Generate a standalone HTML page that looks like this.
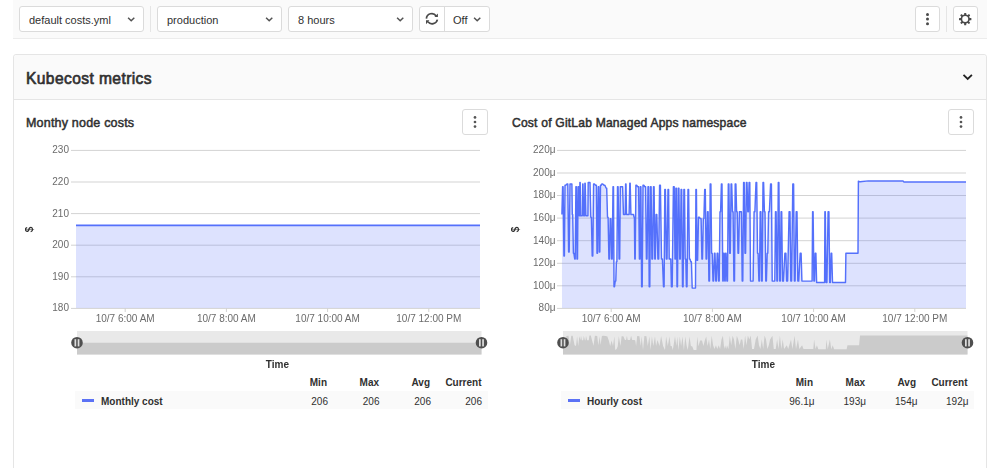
<!DOCTYPE html>
<html><head><meta charset="utf-8">
<style>
*{box-sizing:border-box;margin:0;padding:0}
html,body{width:1000px;height:468px;overflow:hidden;background:#fff;font-family:"Liberation Sans",sans-serif;color:#303030}
.abs{position:absolute}
#toolbar{position:absolute;left:13px;top:0;width:974px;height:39px;background:#fafafa;border-bottom:1px solid #ececec}
.btn{position:absolute;top:6px;height:26px;background:#fff;border:1px solid #dbdbdb;border-radius:3px}
.btn .t{position:absolute;top:7px;font-size:11px;line-height:13px;color:#303030;white-space:nowrap}
.chev{position:absolute;top:9px;width:8px;height:6px;overflow:visible}
.sep{position:absolute;top:6px;width:1px;height:26px;background:#e5e5e5}
#panel{position:absolute;left:13px;top:54px;width:974px;height:430px;border:1px solid #e5e5e5;border-radius:3px;background:#fff}
#phead{position:absolute;left:0;top:0;width:972px;height:45px;background:#fafafa;border-bottom:1px solid #e5e5e5;border-radius:3px 3px 0 0}
.title{position:absolute;font-weight:bold;font-size:11.8px;line-height:14px;color:#303030;white-space:nowrap}
.semi{font-weight:normal;-webkit-text-stroke:0.65px #303030}
.kb{position:absolute;width:26px;height:26px;background:#fff;border:1px solid #dbdbdb;border-radius:3px}
.legrow{position:absolute;top:391px;height:18px;background:#fafafa}
.lh{position:absolute;font-weight:bold;font-size:10px;line-height:12px;color:#303030;white-space:nowrap}
.lv{position:absolute;font-size:10px;line-height:12px;color:#303030;white-space:nowrap}
.lsw{position:absolute;width:12px;height:3px;background:#5b72f5}
</style></head>
<body>
<div id="toolbar">
  <div class="btn" style="left:6px;width:125px"><span class="t" style="left:9px">default costs.yml</span>
    <svg class="chev" style="left:107px" viewBox="0 0 8 6"><path d="M1.1 1.7 L4.2 4.8 L7.3 1.7" fill="none" stroke="#525252" stroke-width="1.45"/></svg></div>
  <div class="sep" style="left:137px"></div>
  <div class="btn" style="left:144px;width:125px"><span class="t" style="left:9px">production</span>
    <svg class="chev" style="left:107px" viewBox="0 0 8 6"><path d="M1.1 1.7 L4.2 4.8 L7.3 1.7" fill="none" stroke="#525252" stroke-width="1.45"/></svg></div>
  <div class="btn" style="left:275px;width:125px"><span class="t" style="left:9px">8 hours</span>
    <svg class="chev" style="left:107px" viewBox="0 0 8 6"><path d="M1.1 1.7 L4.2 4.8 L7.3 1.7" fill="none" stroke="#525252" stroke-width="1.45"/></svg></div>
  <div class="btn" style="left:406px;width:71px">
    <svg class="abs" style="left:5px;top:5px" width="15" height="15" viewBox="0 0 15 15"><g fill="none" stroke="#4a4a4a" stroke-width="1.7"><path d="M1.4 6.6 A5.4 5.4 0 0 1 11.2 3.9"/><path d="M12.4 7.6 A5.4 5.4 0 0 1 2.9 9.8"/></g><path d="M12.9 1.4 L12.9 5.0 L9.4 5.0 Z M1.0 8.3 L1.0 12.3 L4.4 8.3 Z" fill="#4a4a4a"/></svg>
    <div class="abs" style="left:24px;top:0;width:1px;height:24px;background:#dbdbdb"></div>
    <span class="t" style="left:33px">Off</span>
    <svg class="chev" style="left:52.8px" viewBox="0 0 8 6"><path d="M1.1 1.7 L4.2 4.8 L7.3 1.7" fill="none" stroke="#525252" stroke-width="1.45"/></svg>
  </div>
  <div class="btn" style="left:902px;width:25px"><svg class="abs" style="left:0;top:0" width="23" height="24" viewBox="0 0 23 24"><g fill="#4a4a4a"><circle cx="11.5" cy="7.4" r="1.5"/><circle cx="11.5" cy="12.1" r="1.5"/><circle cx="11.5" cy="16.8" r="1.5"/></g></svg></div>
  <div class="sep" style="left:933px"></div>
  <div class="btn" style="left:940px;width:25px"><svg class="abs" style="left:0;top:0" width="23" height="24" viewBox="0 0 23 24">
    <g transform="translate(11.2,12.1)" fill="#4a4a4a">
      <circle r="4.6"/>
      <rect x="-1.05" y="-6.2" width="2.1" height="3" rx="0.5" transform="rotate(0)"/><rect x="-1.05" y="-6.2" width="2.1" height="3" rx="0.5" transform="rotate(45)"/><rect x="-1.05" y="-6.2" width="2.1" height="3" rx="0.5" transform="rotate(90)"/><rect x="-1.05" y="-6.2" width="2.1" height="3" rx="0.5" transform="rotate(135)"/><rect x="-1.05" y="-6.2" width="2.1" height="3" rx="0.5" transform="rotate(180)"/><rect x="-1.05" y="-6.2" width="2.1" height="3" rx="0.5" transform="rotate(225)"/><rect x="-1.05" y="-6.2" width="2.1" height="3" rx="0.5" transform="rotate(270)"/><rect x="-1.05" y="-6.2" width="2.1" height="3" rx="0.5" transform="rotate(315)"/>
      <circle r="3.0" fill="#fff"/>
    </g></svg></div>
</div>
<div id="panel">
  <div id="phead"><span class="title semi" style="left:12px;top:14px;font-size:15.6px;line-height:19px;letter-spacing:0.4px">Kubecost metrics</span>
    <svg class="abs" style="left:948px;top:18px" width="12" height="9" viewBox="0 0 12 9"><path d="M1.5 1.8 L5.7 6 L9.9 1.8" fill="none" stroke="#222" stroke-width="1.8"/></svg>
  </div>
</div>
<span class="title semi" style="left:26px;top:116px;font-size:12.5px;line-height:15px;letter-spacing:0.2px;-webkit-text-stroke-width:0.5px">Monthy node costs</span>
<span class="title semi" style="left:512px;top:116px;font-size:12.1px;line-height:15px;letter-spacing:0.2px;-webkit-text-stroke-width:0.5px">Cost of GitLab Managed Apps namespace</span>
<div class="kb" style="left:462px;top:109px"><svg class="abs" style="left:0;top:0" width="24" height="24" viewBox="0 0 24 24"><g fill="#555"><circle cx="12" cy="7.4" r="1.35"/><circle cx="12" cy="12" r="1.35"/><circle cx="12" cy="16.6" r="1.35"/></g></svg></div>
<div class="kb" style="left:948px;top:109px"><svg class="abs" style="left:0;top:0" width="24" height="24" viewBox="0 0 24 24"><g fill="#555"><circle cx="12" cy="7.4" r="1.35"/><circle cx="12" cy="12" r="1.35"/><circle cx="12" cy="16.6" r="1.35"/></g></svg></div>

<!-- legend chart 1 -->
<span class="lh" style="right:673px;top:376.6px">Min</span>
<span class="lh" style="right:621px;top:376.6px">Max</span>
<span class="lh" style="right:570px;top:376.6px">Avg</span>
<span class="lh" style="right:518.5px;top:376.6px">Current</span>
<div class="legrow" style="left:75px;width:413px"></div>
<div class="lsw" style="left:82px;top:399px"></div>
<span class="lh" style="left:101px;top:395.6px">Monthly cost</span>
<span class="lv" style="right:672px;top:395.6px">206</span>
<span class="lv" style="right:620.5px;top:395.6px">206</span>
<span class="lv" style="right:569px;top:395.6px">206</span>
<span class="lv" style="right:518px;top:395.6px">206</span>

<!-- legend chart 2 -->
<span class="lh" style="right:187px;top:376.6px">Min</span>
<span class="lh" style="right:135px;top:376.6px">Max</span>
<span class="lh" style="right:84px;top:376.6px">Avg</span>
<span class="lh" style="right:32.5px;top:376.6px">Current</span>
<div class="legrow" style="left:561px;width:413px"></div>
<div class="lsw" style="left:568px;top:399px"></div>
<span class="lh" style="left:587px;top:395.6px">Hourly cost</span>
<span class="lv" style="right:185.5px;top:395.6px">96.1μ</span>
<span class="lv" style="right:134px;top:395.6px">193μ</span>
<span class="lv" style="right:82.5px;top:395.6px">154μ</span>
<span class="lv" style="right:31.5px;top:395.6px">192μ</span>

<svg class="abs" style="left:0;top:0;will-change:transform" width="1000" height="468" viewBox="0 0 1000 468">
<style>.yl{font:10px "Liberation Sans",sans-serif;fill:#6b6b6b} .xl{font:10px "Liberation Sans",sans-serif;fill:#6b6b6b} .tm{font:bold 10px "Liberation Sans",sans-serif;fill:#303030}</style>
<line x1="71" y1="150.4" x2="480" y2="150.4" stroke="#d3d3d3" stroke-width="1"/>
<text x="69" y="153.3" text-anchor="end" class="yl">230</text>
<line x1="71" y1="182.0" x2="480" y2="182.0" stroke="#d3d3d3" stroke-width="1"/>
<text x="69" y="184.9" text-anchor="end" class="yl">220</text>
<line x1="71" y1="213.6" x2="480" y2="213.6" stroke="#d3d3d3" stroke-width="1"/>
<text x="69" y="216.5" text-anchor="end" class="yl">210</text>
<line x1="71" y1="245.2" x2="480" y2="245.2" stroke="#d3d3d3" stroke-width="1"/>
<text x="69" y="248.1" text-anchor="end" class="yl">200</text>
<line x1="71" y1="276.8" x2="480" y2="276.8" stroke="#d3d3d3" stroke-width="1"/>
<text x="69" y="279.7" text-anchor="end" class="yl">190</text>
<line x1="71" y1="308.4" x2="480" y2="308.4" stroke="#d3d3d3" stroke-width="1"/>
<text x="69" y="311.3" text-anchor="end" class="yl">180</text>
<rect x="76" y="225.3" width="404" height="82.7" fill="#5470fb" fill-opacity="0.2"/>
<line x1="76" y1="225.3" x2="480" y2="225.3" stroke="#5470fb" stroke-width="1.7"/>
<line x1="125.2" y1="308" x2="125.2" y2="312" stroke="#d3d3d3"/>
<text x="125.2" y="322" text-anchor="middle" class="xl">10/7 6:00 AM</text>
<line x1="226.4" y1="308" x2="226.4" y2="312" stroke="#d3d3d3"/>
<text x="226.4" y="322" text-anchor="middle" class="xl">10/7 8:00 AM</text>
<line x1="327.6" y1="308" x2="327.6" y2="312" stroke="#d3d3d3"/>
<text x="327.6" y="322" text-anchor="middle" class="xl">10/7 10:00 AM</text>
<line x1="428.8" y1="308" x2="428.8" y2="312" stroke="#d3d3d3"/>
<text x="428.8" y="322" text-anchor="middle" class="xl">10/7 12:00 PM</text>
<rect x="77" y="331" width="404.5" height="23.5" fill="#e9e9e9"/>
<rect x="77" y="342.75" width="404.5" height="11.75" fill="#cbcbcb"/>
<circle cx="77" cy="342.7" r="5.8" fill="#4f4f4f"/>
<rect x="74.5" y="339.2" width="1.7" height="7.2" fill="#dedede"/>
<rect x="77.7" y="339.2" width="1.7" height="7.2" fill="#dedede"/>
<circle cx="481.5" cy="342.7" r="5.8" fill="#4f4f4f"/>
<rect x="479.0" y="339.2" width="1.7" height="7.2" fill="#dedede"/>
<rect x="482.2" y="339.2" width="1.7" height="7.2" fill="#dedede"/>
<text x="277.4" y="368" text-anchor="middle" class="tm">Time</text>
<text transform="translate(32.7,229.5) rotate(-90)" text-anchor="middle" class="tm">$</text>
<line x1="557" y1="150.4" x2="966" y2="150.4" stroke="#d3d3d3" stroke-width="1"/>
<text x="555.5" y="153.3" text-anchor="end" class="yl">220μ</text>
<line x1="557" y1="173.0" x2="966" y2="173.0" stroke="#d3d3d3" stroke-width="1"/>
<text x="555.5" y="175.9" text-anchor="end" class="yl">200μ</text>
<line x1="557" y1="195.5" x2="966" y2="195.5" stroke="#d3d3d3" stroke-width="1"/>
<text x="555.5" y="198.4" text-anchor="end" class="yl">180μ</text>
<line x1="557" y1="218.1" x2="966" y2="218.1" stroke="#d3d3d3" stroke-width="1"/>
<text x="555.5" y="221.0" text-anchor="end" class="yl">160μ</text>
<line x1="557" y1="240.7" x2="966" y2="240.7" stroke="#d3d3d3" stroke-width="1"/>
<text x="555.5" y="243.6" text-anchor="end" class="yl">140μ</text>
<line x1="557" y1="263.3" x2="966" y2="263.3" stroke="#d3d3d3" stroke-width="1"/>
<text x="555.5" y="266.2" text-anchor="end" class="yl">120μ</text>
<line x1="557" y1="285.8" x2="966" y2="285.8" stroke="#d3d3d3" stroke-width="1"/>
<text x="555.5" y="288.7" text-anchor="end" class="yl">100μ</text>
<line x1="557" y1="308.4" x2="966" y2="308.4" stroke="#d3d3d3" stroke-width="1"/>
<text x="555.5" y="311.3" text-anchor="end" class="yl">80μ</text>
<path d="M561.9,214.4 L562.6,186.7 L563.1,186.7 L563.9,256.1 L564.4,256.1 L565.0,185.3 L565.8,185.3 L567.0,183.9 L567.8,183.9 L568.6,251.9 L569.2,251.9 L570.0,183.9 L570.6,183.9 L571.4,183.9 L571.9,183.9 L572.3,214.4 L572.7,214.4 L573.4,253.3 L573.9,253.3 L574.7,258.9 L575.2,258.9 L575.9,186.7 L576.4,186.7 L577.0,258.9 L577.5,258.9 L578.1,186.7 L578.6,186.7 L579.2,215.8 L579.6,215.8 L579.9,182.5 L580.2,182.5 L580.6,215.8 L581.1,215.8 L581.9,215.8 L582.3,215.8 L582.7,183.9 L583.0,183.9 L583.6,215.8 L584.0,215.8 L584.3,215.8 L584.6,215.8 L584.9,183.3 L585.2,183.3 L585.9,215.8 L586.5,215.8 L587.4,215.8 L587.9,215.8 L588.2,182.5 L588.6,182.5 L589.4,182.5 L590.0,182.5 L590.8,217.2 L591.4,217.2 L592.2,256.1 L592.8,256.1 L593.6,183.9 L594.4,183.9 L595.6,185.3 L596.4,185.3 L597.0,253.3 L597.5,253.3 L598.3,186.7 L598.8,186.7 L599.3,251.9 L599.8,251.9 L600.5,185.3 L601.1,185.3 L601.9,183.9 L602.7,183.9 L604.0,185.3 L604.9,185.3 L606.0,188.1 L606.7,188.1 L607.5,217.2 L608.1,217.2 L608.9,258.9 L609.5,258.9 L610.2,218.6 L610.9,218.6 L611.6,258.9 L612.2,258.9 L613.0,186.7 L613.5,186.7 L614.0,286.7 L614.5,286.7 L615.2,281.1 L615.8,281.1 L616.4,261.7 L616.9,261.7 L617.5,186.7 L618.1,186.7 L619.1,258.9 L619.7,258.9 L620.3,186.7 L620.9,186.7 L621.9,186.7 L622.6,186.7 L623.5,214.4 L624.1,214.4 L624.8,214.4 L625.2,214.4 L625.6,183.9 L626.0,183.9 L626.5,214.4 L627.2,214.4 L628.4,214.4 L629.1,214.4 L629.8,183.3 L630.2,183.3 L630.9,214.4 L631.6,214.4 L632.8,214.4 L633.5,214.4 L634.0,217.2 L634.4,217.2 L634.8,258.9 L635.2,258.9 L635.9,185.3 L636.6,185.3 L637.8,186.7 L638.6,186.7 L639.4,258.9 L639.9,258.9 L640.4,186.7 L640.9,186.7 L641.6,286.7 L642.2,286.7 L643.0,185.3 L643.8,185.3 L644.9,186.7 L645.6,186.7 L646.4,258.9 L647.0,258.9 L648.0,186.7 L648.6,186.7 L649.2,286.7 L649.8,286.7 L650.5,186.7 L651.1,186.7 L651.9,258.9 L652.6,258.9 L653.5,186.7 L654.1,186.7 L654.8,258.9 L655.3,258.9 L656.1,214.4 L656.8,214.4 L657.9,258.9 L658.7,258.9 L659.6,185.3 L660.4,185.3 L661.5,258.9 L662.4,258.9 L663.5,286.7 L664.1,286.7 L664.8,189.4 L665.4,189.4 L666.3,258.9 L667.0,258.9 L668.0,189.4 L668.6,189.4 L669.2,258.9 L669.7,258.9 L670.3,258.9 L670.8,258.9 L671.4,286.7 L672.2,286.7 L673.4,186.7 L674.2,186.7 L675.0,258.9 L675.5,258.9 L675.9,188.1 L676.4,188.1 L677.0,286.7 L677.5,286.7 L678.3,188.1 L678.9,188.1 L679.7,258.9 L680.3,258.9 L681.1,189.4 L681.7,189.4 L682.5,286.7 L683.1,286.7 L683.9,189.4 L684.5,189.4 L685.2,258.9 L685.8,258.9 L686.4,286.7 L687.0,286.7 L688.0,189.4 L688.6,189.4 L689.4,258.9 L690.0,258.9 L690.8,261.7 L691.4,261.7 L692.2,288.1 L693.1,288.1 L694.7,288.1 L695.5,288.1 L695.9,189.4 L696.4,189.4 L697.0,260.3 L697.6,260.3 L698.5,217.2 L699.3,217.2 L700.4,218.6 L701.1,218.6 L701.9,258.9 L702.5,258.9 L703.3,218.6 L703.9,218.6 L704.7,189.4 L705.3,189.4 L706.1,258.9 L706.7,258.9 L707.5,211.7 L708.1,211.7 L708.9,281.1 L709.5,281.1 L710.2,183.9 L710.9,183.9 L711.6,253.3 L712.2,253.3 L713.0,281.1 L713.6,281.1 L714.4,253.3 L715.0,253.3 L715.8,281.1 L716.4,281.1 L717.2,253.3 L717.8,253.3 L718.6,281.1 L719.2,281.1 L720.0,211.7 L720.6,211.7 L721.4,183.9 L722.0,183.9 L722.8,281.1 L723.2,281.1 L723.7,253.3 L724.1,253.3 L724.8,281.1 L725.2,281.1 L725.6,253.3 L726.1,253.3 L726.9,281.1 L727.5,281.1 L728.3,183.9 L728.9,183.9 L729.7,253.3 L730.3,253.3 L731.1,183.9 L731.7,183.9 L732.5,211.7 L733.1,211.7 L733.9,281.1 L734.5,281.1 L735.2,183.9 L735.9,183.9 L736.6,211.7 L737.2,211.7 L738.0,253.3 L738.6,253.3 L739.4,211.7 L740.0,211.7 L740.8,211.7 L741.4,211.7 L742.2,281.1 L742.8,281.1 L743.6,182.5 L744.2,182.5 L745.0,253.3 L745.6,253.3 L746.4,182.5 L747.0,182.5 L747.8,211.7 L748.4,211.7 L749.1,182.5 L749.8,182.5 L750.5,281.1 L751.3,281.1 L752.4,281.1 L753.1,281.1 L754.1,211.7 L754.9,211.7 L756.0,182.5 L756.7,182.5 L757.5,253.3 L758.1,253.3 L758.9,281.1 L759.5,281.1 L760.2,211.7 L760.9,211.7 L761.6,281.1 L762.2,281.1 L763.0,182.5 L763.6,182.5 L764.4,211.7 L765.0,211.7 L765.8,281.1 L766.4,281.1 L767.2,253.3 L767.8,253.3 L768.6,211.7 L769.4,211.7 L770.6,183.9 L771.4,183.9 L772.2,281.1 L772.9,281.1 L774.0,281.1 L774.8,281.1 L775.5,211.7 L776.1,211.7 L776.9,281.1 L777.5,281.1 L778.3,182.5 L778.9,182.5 L779.7,281.1 L780.3,281.1 L781.1,211.7 L781.7,211.7 L782.5,281.1 L783.4,281.1 L784.9,253.3 L785.9,253.3 L786.6,281.1 L787.6,281.1 L789.1,211.7 L790.0,211.7 L790.8,281.1 L791.6,281.1 L792.8,183.9 L793.6,183.9 L794.4,281.1 L795.1,281.1 L796.2,211.7 L797.0,211.7 L797.8,281.1 L798.7,281.1 L800.2,253.3 L801.1,253.3 L801.9,281.1 L802.9,281.1 L811.2,281.1 L812.1,281.1 L812.6,211.7 L813.1,211.7 L813.9,281.1 L814.5,281.1 L815.2,253.3 L815.9,253.3 L816.6,282.5 L817.6,282.5 L823.7,282.5 L824.6,282.5 L824.9,211.7 L825.3,211.7 L826.1,282.5 L826.9,282.5 L828.1,211.7 L828.9,211.7 L829.7,282.5 L830.3,282.5 L831.1,253.3 L831.7,253.3 L832.5,282.5 L833.5,282.5 L844.6,282.5 L845.5,282.5 L845.9,253.3 L846.8,253.3 L857.1,253.3 L858.0,253.3 L858.4,181.1 L858.8,181.1 L859.3,181.8 L860.2,181.8 L868.3,180.9 L869.7,180.9 L902.3,181.0 L903.2,181.0 L903.8,182.0 L904.7,182.0 L966.0,182.0 L966,308 L562,308 Z" fill="#5470fb" fill-opacity="0.2"/>
<path d="M561.9,214.4 L562.6,186.7 L563.1,186.7 L563.9,256.1 L564.4,256.1 L565.0,185.3 L565.8,185.3 L567.0,183.9 L567.8,183.9 L568.6,251.9 L569.2,251.9 L570.0,183.9 L570.6,183.9 L571.4,183.9 L571.9,183.9 L572.3,214.4 L572.7,214.4 L573.4,253.3 L573.9,253.3 L574.7,258.9 L575.2,258.9 L575.9,186.7 L576.4,186.7 L577.0,258.9 L577.5,258.9 L578.1,186.7 L578.6,186.7 L579.2,215.8 L579.6,215.8 L579.9,182.5 L580.2,182.5 L580.6,215.8 L581.1,215.8 L581.9,215.8 L582.3,215.8 L582.7,183.9 L583.0,183.9 L583.6,215.8 L584.0,215.8 L584.3,215.8 L584.6,215.8 L584.9,183.3 L585.2,183.3 L585.9,215.8 L586.5,215.8 L587.4,215.8 L587.9,215.8 L588.2,182.5 L588.6,182.5 L589.4,182.5 L590.0,182.5 L590.8,217.2 L591.4,217.2 L592.2,256.1 L592.8,256.1 L593.6,183.9 L594.4,183.9 L595.6,185.3 L596.4,185.3 L597.0,253.3 L597.5,253.3 L598.3,186.7 L598.8,186.7 L599.3,251.9 L599.8,251.9 L600.5,185.3 L601.1,185.3 L601.9,183.9 L602.7,183.9 L604.0,185.3 L604.9,185.3 L606.0,188.1 L606.7,188.1 L607.5,217.2 L608.1,217.2 L608.9,258.9 L609.5,258.9 L610.2,218.6 L610.9,218.6 L611.6,258.9 L612.2,258.9 L613.0,186.7 L613.5,186.7 L614.0,286.7 L614.5,286.7 L615.2,281.1 L615.8,281.1 L616.4,261.7 L616.9,261.7 L617.5,186.7 L618.1,186.7 L619.1,258.9 L619.7,258.9 L620.3,186.7 L620.9,186.7 L621.9,186.7 L622.6,186.7 L623.5,214.4 L624.1,214.4 L624.8,214.4 L625.2,214.4 L625.6,183.9 L626.0,183.9 L626.5,214.4 L627.2,214.4 L628.4,214.4 L629.1,214.4 L629.8,183.3 L630.2,183.3 L630.9,214.4 L631.6,214.4 L632.8,214.4 L633.5,214.4 L634.0,217.2 L634.4,217.2 L634.8,258.9 L635.2,258.9 L635.9,185.3 L636.6,185.3 L637.8,186.7 L638.6,186.7 L639.4,258.9 L639.9,258.9 L640.4,186.7 L640.9,186.7 L641.6,286.7 L642.2,286.7 L643.0,185.3 L643.8,185.3 L644.9,186.7 L645.6,186.7 L646.4,258.9 L647.0,258.9 L648.0,186.7 L648.6,186.7 L649.2,286.7 L649.8,286.7 L650.5,186.7 L651.1,186.7 L651.9,258.9 L652.6,258.9 L653.5,186.7 L654.1,186.7 L654.8,258.9 L655.3,258.9 L656.1,214.4 L656.8,214.4 L657.9,258.9 L658.7,258.9 L659.6,185.3 L660.4,185.3 L661.5,258.9 L662.4,258.9 L663.5,286.7 L664.1,286.7 L664.8,189.4 L665.4,189.4 L666.3,258.9 L667.0,258.9 L668.0,189.4 L668.6,189.4 L669.2,258.9 L669.7,258.9 L670.3,258.9 L670.8,258.9 L671.4,286.7 L672.2,286.7 L673.4,186.7 L674.2,186.7 L675.0,258.9 L675.5,258.9 L675.9,188.1 L676.4,188.1 L677.0,286.7 L677.5,286.7 L678.3,188.1 L678.9,188.1 L679.7,258.9 L680.3,258.9 L681.1,189.4 L681.7,189.4 L682.5,286.7 L683.1,286.7 L683.9,189.4 L684.5,189.4 L685.2,258.9 L685.8,258.9 L686.4,286.7 L687.0,286.7 L688.0,189.4 L688.6,189.4 L689.4,258.9 L690.0,258.9 L690.8,261.7 L691.4,261.7 L692.2,288.1 L693.1,288.1 L694.7,288.1 L695.5,288.1 L695.9,189.4 L696.4,189.4 L697.0,260.3 L697.6,260.3 L698.5,217.2 L699.3,217.2 L700.4,218.6 L701.1,218.6 L701.9,258.9 L702.5,258.9 L703.3,218.6 L703.9,218.6 L704.7,189.4 L705.3,189.4 L706.1,258.9 L706.7,258.9 L707.5,211.7 L708.1,211.7 L708.9,281.1 L709.5,281.1 L710.2,183.9 L710.9,183.9 L711.6,253.3 L712.2,253.3 L713.0,281.1 L713.6,281.1 L714.4,253.3 L715.0,253.3 L715.8,281.1 L716.4,281.1 L717.2,253.3 L717.8,253.3 L718.6,281.1 L719.2,281.1 L720.0,211.7 L720.6,211.7 L721.4,183.9 L722.0,183.9 L722.8,281.1 L723.2,281.1 L723.7,253.3 L724.1,253.3 L724.8,281.1 L725.2,281.1 L725.6,253.3 L726.1,253.3 L726.9,281.1 L727.5,281.1 L728.3,183.9 L728.9,183.9 L729.7,253.3 L730.3,253.3 L731.1,183.9 L731.7,183.9 L732.5,211.7 L733.1,211.7 L733.9,281.1 L734.5,281.1 L735.2,183.9 L735.9,183.9 L736.6,211.7 L737.2,211.7 L738.0,253.3 L738.6,253.3 L739.4,211.7 L740.0,211.7 L740.8,211.7 L741.4,211.7 L742.2,281.1 L742.8,281.1 L743.6,182.5 L744.2,182.5 L745.0,253.3 L745.6,253.3 L746.4,182.5 L747.0,182.5 L747.8,211.7 L748.4,211.7 L749.1,182.5 L749.8,182.5 L750.5,281.1 L751.3,281.1 L752.4,281.1 L753.1,281.1 L754.1,211.7 L754.9,211.7 L756.0,182.5 L756.7,182.5 L757.5,253.3 L758.1,253.3 L758.9,281.1 L759.5,281.1 L760.2,211.7 L760.9,211.7 L761.6,281.1 L762.2,281.1 L763.0,182.5 L763.6,182.5 L764.4,211.7 L765.0,211.7 L765.8,281.1 L766.4,281.1 L767.2,253.3 L767.8,253.3 L768.6,211.7 L769.4,211.7 L770.6,183.9 L771.4,183.9 L772.2,281.1 L772.9,281.1 L774.0,281.1 L774.8,281.1 L775.5,211.7 L776.1,211.7 L776.9,281.1 L777.5,281.1 L778.3,182.5 L778.9,182.5 L779.7,281.1 L780.3,281.1 L781.1,211.7 L781.7,211.7 L782.5,281.1 L783.4,281.1 L784.9,253.3 L785.9,253.3 L786.6,281.1 L787.6,281.1 L789.1,211.7 L790.0,211.7 L790.8,281.1 L791.6,281.1 L792.8,183.9 L793.6,183.9 L794.4,281.1 L795.1,281.1 L796.2,211.7 L797.0,211.7 L797.8,281.1 L798.7,281.1 L800.2,253.3 L801.1,253.3 L801.9,281.1 L802.9,281.1 L811.2,281.1 L812.1,281.1 L812.6,211.7 L813.1,211.7 L813.9,281.1 L814.5,281.1 L815.2,253.3 L815.9,253.3 L816.6,282.5 L817.6,282.5 L823.7,282.5 L824.6,282.5 L824.9,211.7 L825.3,211.7 L826.1,282.5 L826.9,282.5 L828.1,211.7 L828.9,211.7 L829.7,282.5 L830.3,282.5 L831.1,253.3 L831.7,253.3 L832.5,282.5 L833.5,282.5 L844.6,282.5 L845.5,282.5 L845.9,253.3 L846.8,253.3 L857.1,253.3 L858.0,253.3 L858.4,181.1 L858.8,181.1 L859.3,181.8 L860.2,181.8 L868.3,180.9 L869.7,180.9 L902.3,181.0 L903.2,181.0 L903.8,182.0 L904.7,182.0 L966.0,182.0" fill="none" stroke="#5470fb" stroke-width="1.45" stroke-linejoin="round"/>
<line x1="611.2" y1="308" x2="611.2" y2="312" stroke="#d3d3d3"/>
<text x="611.2" y="322" text-anchor="middle" class="xl">10/7 6:00 AM</text>
<line x1="712.4" y1="308" x2="712.4" y2="312" stroke="#d3d3d3"/>
<text x="712.4" y="322" text-anchor="middle" class="xl">10/7 8:00 AM</text>
<line x1="813.6" y1="308" x2="813.6" y2="312" stroke="#d3d3d3"/>
<text x="813.6" y="322" text-anchor="middle" class="xl">10/7 10:00 AM</text>
<line x1="914.8" y1="308" x2="914.8" y2="312" stroke="#d3d3d3"/>
<text x="914.8" y="322" text-anchor="middle" class="xl">10/7 12:00 PM</text>
<rect x="563" y="331" width="404.5" height="23.5" fill="#e9e9e9"/>
<path d="M563,354.5 L562.9,340.0 L563.8,336.2 L565.2,345.7 L566.3,336.0 L568.5,335.8 L569.9,345.1 L571.3,335.8 L572.7,335.8 L573.5,340.0 L574.6,345.3 L576.0,346.1 L577.1,336.2 L578.2,346.1 L579.4,336.2 L580.5,340.2 L581.0,335.6 L581.9,340.2 L583.2,340.2 L583.8,335.8 L584.9,340.2 L585.5,340.2 L586.0,335.7 L587.1,340.2 L588.8,340.2 L589.4,335.6 L590.8,335.6 L592.1,340.4 L593.5,345.7 L594.9,335.8 L597.2,336.0 L598.3,345.3 L599.7,336.2 L600.5,345.1 L601.9,336.0 L603.3,335.8 L605.5,336.0 L607.4,336.4 L608.8,340.4 L610.2,346.1 L611.6,340.6 L613.0,346.1 L614.4,336.2 L615.2,349.9 L616.6,349.1 L617.7,346.5 L618.8,336.2 L620.5,346.1 L621.6,336.2 L623.3,336.2 L625.0,340.0 L626.1,340.0 L626.9,335.8 L627.7,340.0 L630.0,340.0 L631.1,335.7 L632.2,340.0 L634.4,340.0 L635.3,340.4 L636.1,346.1 L637.2,336.0 L639.4,336.2 L640.8,346.1 L641.7,336.2 L643.0,349.9 L644.4,336.0 L646.4,336.2 L647.8,346.1 L649.4,336.2 L650.6,349.9 L651.9,336.2 L653.3,346.1 L655.0,336.2 L656.1,346.1 L657.5,340.0 L659.5,346.1 L661.1,336.0 L663.1,346.1 L665.0,349.9 L666.1,336.6 L667.8,346.1 L669.5,336.6 L670.6,346.1 L671.7,346.1 L672.8,349.9 L675.0,336.2 L676.4,346.1 L677.3,336.4 L678.4,349.9 L679.8,336.4 L681.1,346.1 L682.5,336.6 L683.9,349.9 L685.3,336.6 L686.7,346.1 L687.8,349.9 L689.5,336.6 L690.9,346.1 L692.3,346.5 L693.7,350.1 L696.4,350.1 L697.3,336.6 L698.4,346.3 L700.1,340.4 L702.0,340.6 L703.4,346.1 L704.8,340.6 L706.2,336.6 L707.6,346.1 L709.0,339.6 L710.3,349.1 L711.7,335.8 L713.1,345.3 L714.5,349.1 L715.9,345.3 L717.3,349.1 L718.7,345.3 L720.1,349.1 L721.5,339.6 L722.9,335.8 L724.3,349.1 L725.1,345.3 L726.2,349.1 L727.0,345.3 L728.4,349.1 L729.8,335.8 L731.2,345.3 L732.6,335.8 L734.0,339.6 L735.4,349.1 L736.8,335.8 L738.2,339.6 L739.6,345.3 L740.9,339.6 L742.3,339.6 L743.7,349.1 L745.1,335.6 L746.5,345.3 L747.9,335.6 L749.3,339.6 L750.7,335.6 L752.1,349.1 L754.0,349.1 L755.7,339.6 L757.6,335.6 L759.0,345.3 L760.4,349.1 L761.8,339.6 L763.2,349.1 L764.6,335.6 L766.0,339.6 L767.4,349.1 L768.8,345.3 L770.1,339.6 L772.4,335.8 L773.8,349.1 L775.7,349.1 L777.1,339.6 L778.5,349.1 L779.9,335.6 L781.3,349.1 L782.7,339.6 L784.1,349.1 L786.8,345.3 L788.2,349.1 L791.0,339.6 L792.4,349.1 L794.6,335.8 L796.0,349.1 L798.0,339.6 L799.3,349.1 L802.1,345.3 L803.5,349.1 L813.3,349.1 L814.1,339.6 L815.5,349.1 L816.9,345.3 L818.3,349.3 L825.8,349.3 L826.3,339.6 L827.7,349.3 L829.9,339.6 L831.3,349.3 L832.7,345.3 L834.1,349.3 L846.6,349.3 L847.5,345.3 L859.1,345.3 L860.0,335.4 L860.9,335.5 L870.4,335.4 L904.4,335.4 L905.4,335.6 L967.5,335.6 L967.5,354.5 Z" fill="#cbcbcb"/>
<circle cx="563" cy="342.7" r="5.8" fill="#4f4f4f"/>
<rect x="560.5" y="339.2" width="1.7" height="7.2" fill="#dedede"/>
<rect x="563.7" y="339.2" width="1.7" height="7.2" fill="#dedede"/>
<circle cx="967.5" cy="342.7" r="5.8" fill="#4f4f4f"/>
<rect x="965.0" y="339.2" width="1.7" height="7.2" fill="#dedede"/>
<rect x="968.2" y="339.2" width="1.7" height="7.2" fill="#dedede"/>
<text x="763.4" y="368" text-anchor="middle" class="tm">Time</text>
<text transform="translate(518.7,229.5) rotate(-90)" text-anchor="middle" class="tm">$</text>
</svg>
</body></html>
